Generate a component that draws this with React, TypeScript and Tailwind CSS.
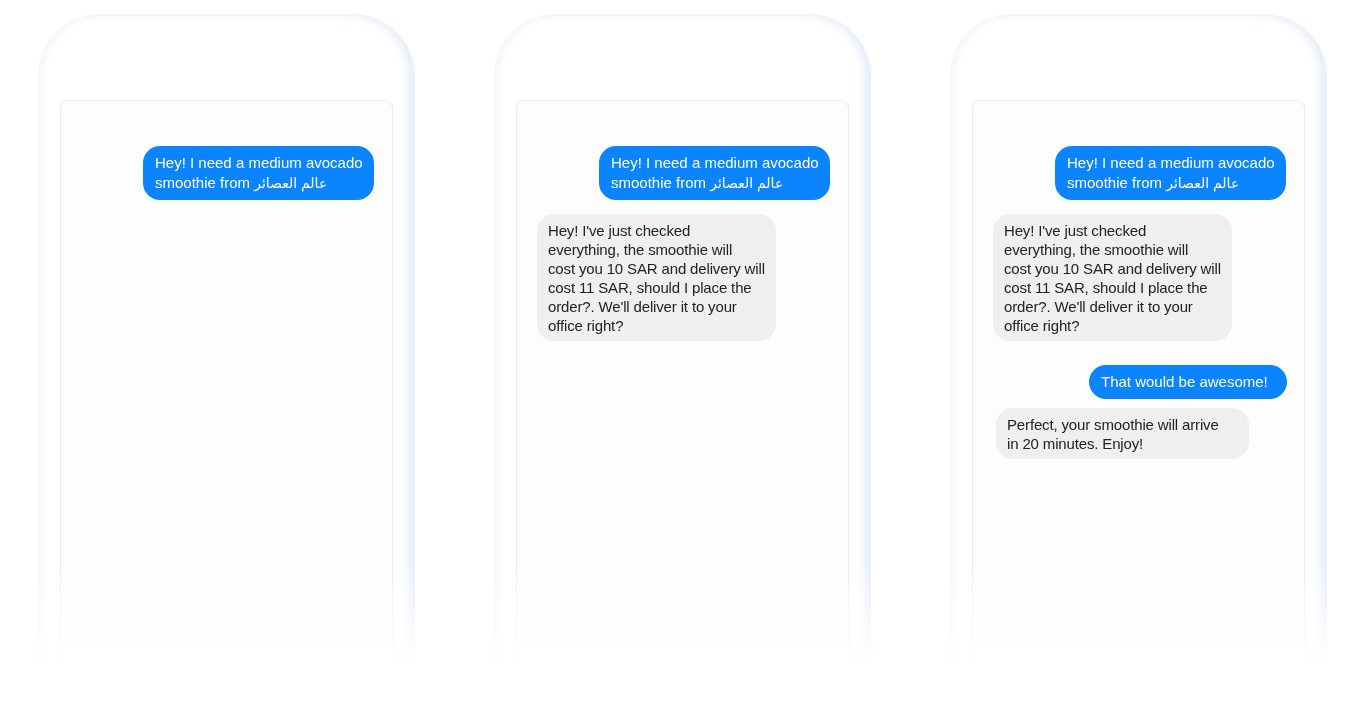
const font = { fontFamily: '"Liberation Sans", "DejaVu Sans", Arial, sans-serif' };

type Msg = { me: boolean; lines: string[]; className?: string };

const first: Msg = {
  me: true,
  lines: ["Hey! I need a medium avocado", "smoothie from "],
};

const reply: Msg = {
  me: false,
  lines: [
    "Hey! I've just checked",
    "everything, the smoothie will",
    "cost you 10 SAR and delivery will",
    "cost 11 SAR, should I place the",
    "order?. We'll deliver it to your",
    "office right?",
  ],
  className: "mt-[14px] w-[239px]",
};

const phones: Msg[][] = [
  [first],
  [first, reply],
  [
    first,
    reply,
    { me: true, lines: ["That would be awesome!"], className: "mt-[24px] w-[198px] mr-[-1px]" },
    {
      me: false,
      lines: ["Perfect, your smoothie will arrive", "in 20 minutes. Enjoy!"],
      className: "mt-[9px] w-[253px] ml-[3px]",
    },
  ],
];

function Bubble({ m }: { m: Msg }) {
  if (m.me) {
    return (
      <div
        className={`self-end rounded-[17px] bg-[#0a84ff] px-[12px] py-[7px] text-[15px] leading-[20px] text-white whitespace-nowrap ${m.className ?? "w-[231px]"}`}
      >
        {m.lines.map((l, i) => (
          <div key={i}>
            {l}
            {i === 1 && m.lines[1] === "smoothie from " && (
              <span className="text-[14px]" dir="rtl">
                عالم العصائر
              </span>
            )}
          </div>
        ))}
      </div>
    );
  }
  return (
    <div
      className={`self-start rounded-[17px] bg-[#efefef] px-[11px] py-[6.5px] text-[15px] leading-[19px] text-[#222] whitespace-nowrap tracking-[-0.15px] ${m.className ?? ""}`}
    >
      {m.lines.map((l, i) => (
        <div key={i}>{l}</div>
      ))}
    </div>
  );
}

function Phone({ msgs }: { msgs: Msg[] }) {
  return (
    <div className="w-[377px] h-[655px] flex flex-col rounded-t-[62px] bg-white pt-[86px] pl-[22px] pr-[22px] shadow-[0_0_14px_rgba(120,140,170,0.12),inset_-7px_0_8px_rgba(170,190,225,0.28),inset_6px_0_7px_rgba(0,0,0,0.035)] [mask-image:linear-gradient(to_bottom,black_84%,transparent_100%)]">
      <div className="flex-1 rounded-t-[8px] border border-b-0 border-[#ececec] bg-[#fdfdfd] flex flex-col pt-[45px] pl-[20px] pr-[18px]">
        {msgs.map((m, i) => (
          <Bubble key={i} m={m} />
        ))}
      </div>
    </div>
  );
}

export default function App() {
  return (
    <div className="w-[1367px] h-[723px] bg-white overflow-hidden" style={font}>
      <div className="flex justify-center gap-[79px] pt-[14px] pr-[2px]">
        {phones.map((p, i) => (
          <Phone key={i} msgs={p} />
        ))}
      </div>
    </div>
  );
}
